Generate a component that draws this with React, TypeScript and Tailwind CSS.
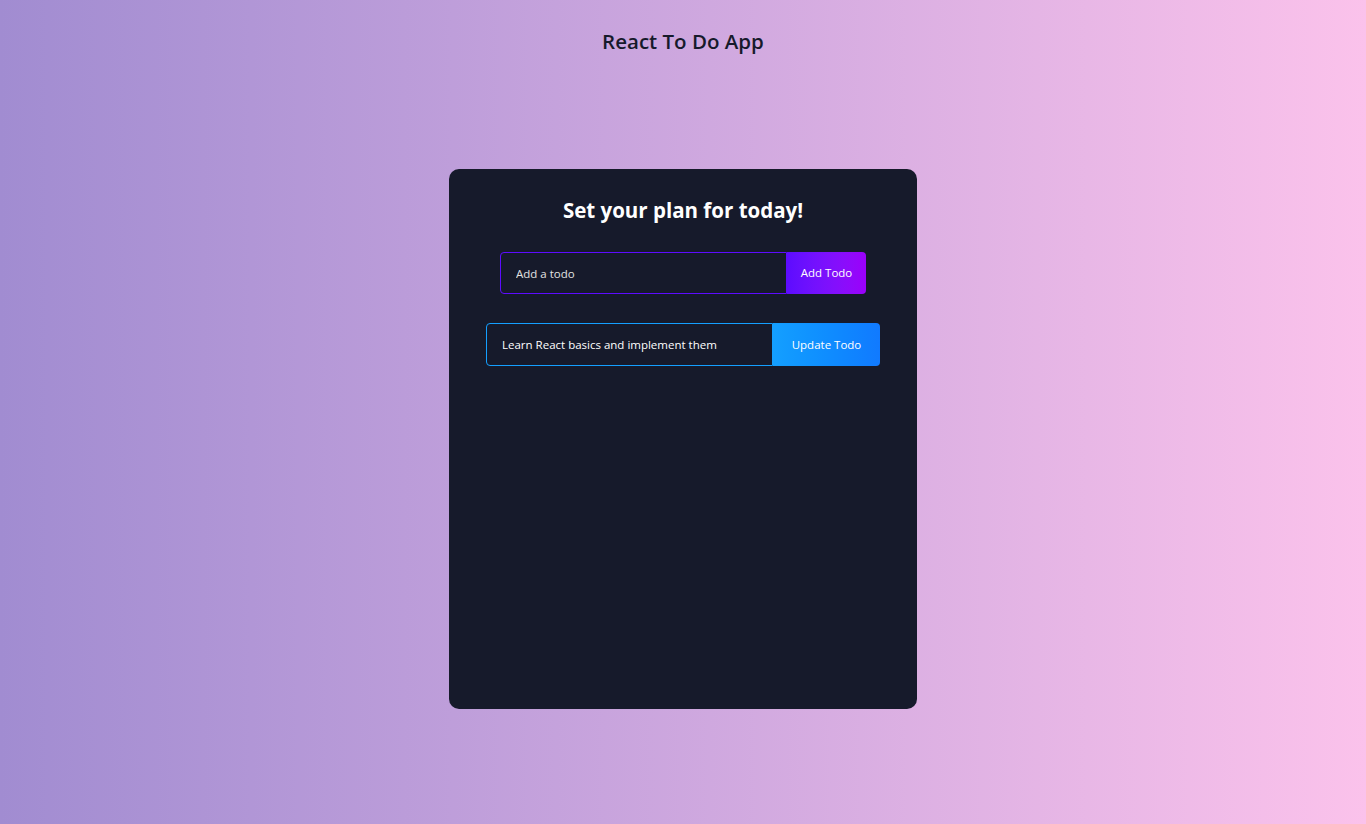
import React from "react";

export default function App() {
  const font = { fontFamily: '"Open Sans", "Noto Sans", sans-serif' };
  return (
    <div
      className="w-full min-h-[824px] flex flex-col items-center bg-gradient-to-r from-[#a18cd1] to-[#fbc2eb]"
      style={font}
    >
      <h1 className="mt-[27px] text-[20.5px] leading-[28px] text-[#161a2b] font-semibold">React To Do App</h1>
      <div className="mt-[114px] w-[468px] h-[540px] rounded-[10px] bg-[#161a2b] flex flex-col items-center pt-[27px]">
        <h2 className="text-[20.5px] leading-[28px] font-bold text-white">Set your plan for today!</h2>
        <form className="mt-[28px] flex" onSubmit={(e) => e.preventDefault()}>
          <input
            className="w-[287px] h-[42px] border border-[#5d0cff] rounded-l-[4px] bg-transparent pl-[15px] text-[11.5px] text-white placeholder:text-[#e2e2e2] outline-none"
            placeholder="Add a todo"
            style={font}
          />
          <button
            type="submit"
            className="w-[79px] h-[42px] rounded-r-[4px] bg-gradient-to-r from-[#5d0cff] to-[#9b00fa] text-white text-[11.5px] font-medium"
            style={font}
          >
            Add Todo
          </button>
        </form>
        <form className="mt-[29px] flex" onSubmit={(e) => e.preventDefault()}>
          <input
            className="w-[287px] h-[43px] border border-[#149fff] rounded-l-[4px] bg-transparent pl-[15px] text-[11.5px] text-white outline-none font-medium"
            defaultValue="Learn React basics and implement them"
            style={font}
          />
          <button
            type="submit"
            className="w-[107px] h-[43px] rounded-r-[4px] bg-gradient-to-r from-[#149fff] to-[#117aff] text-white text-[11.5px] font-medium"
            style={font}
          >
            Update Todo
          </button>
        </form>
      </div>
    </div>
  );
}
